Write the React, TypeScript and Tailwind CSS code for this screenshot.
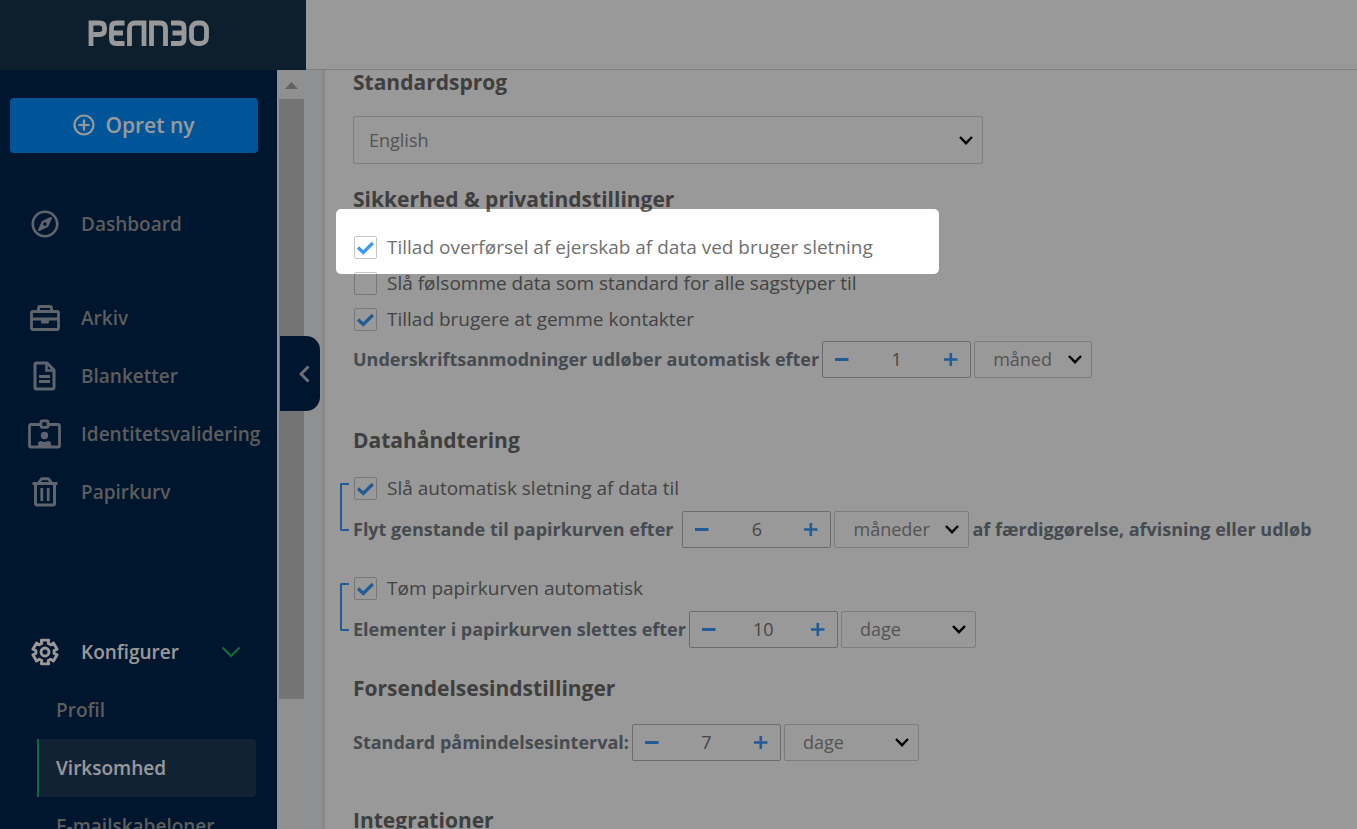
import { useId, useState, type ReactNode } from "react";
import { FaRegCompass } from "react-icons/fa";

function Logo() {
  return (
    <svg width="122" height="27" viewBox="0 0 122 27" fill="none" stroke="#fff" strokeWidth="4.800" role="img" aria-label="Penneo">
      <path d="M3 26V3H11.500Q16.500 3 16.500 7.500V10Q16.500 14.500 11.500 14.500H5.500" />
      <path d="M36.500 3H28Q23.500 3 23.500 7.500V19Q23.500 23.500 28 23.500H36.500M24 13H35" />
      <path d="M41.500 26V8.500Q41.500 3 47 3H56V26" />
      <path d="M63.500 26V3H72Q77.500 3 77.500 8.500V26" />
      <path d="M83 3H91.500Q96 3 96 7.500V19Q96 23.500 91.500 23.500H83M84.500 13H95.500" />
      <rect x="103.500" y="3" width="15" height="20.500" rx="6" />
    </svg>
  );
}

function BriefcaseIcon() {
  return (
    <svg width="30" height="26" viewBox="0 0 30 26" fill="none" stroke="currentColor" strokeWidth="2.800">
      <rect x="1.500" y="6.500" width="27" height="18" rx="1.500" />
      <path d="M8.500 6V3Q8.500 1.500 10 1.500H20Q21.500 1.500 21.500 3V6M2 14H28" />
      <path d="M11 14H19V17Q19 18.500 17.500 18.500H12.500Q11 18.500 11 17Z" fill="currentColor" stroke="none" />
    </svg>
  );
}

function FileIcon() {
  return (
    <svg width="23" height="30" viewBox="0 0 23 30" fill="none" stroke="currentColor" strokeWidth="3">
      <path d="M3.500 2H14L21 9V26.500Q21 28 19.500 28H3.500Q2 28 2 26.500V3.500Q2 2 3.500 2Z" />
      <path d="M13.500 2V9.500H21" strokeWidth="2.600" />
      <path d="M6 15.500H17M6 20.500H17" strokeWidth="2.800" />
    </svg>
  );
}

function BadgeIcon() {
  return (
    <svg width="33" height="30" viewBox="0 0 33 30" fill="none" stroke="currentColor" strokeWidth="2.800">
      <path d="M12 5.500H3Q1.500 5.500 1.500 7V26.500Q1.500 28 3 28H30Q31.500 28 31.500 26.500V7Q31.500 5.500 30 5.500H21" />
      <rect x="13" y="1.800" width="7" height="6.500" rx="1" />
      <circle cx="16.500" cy="16.500" r="3.700" fill="currentColor" stroke="none" />
      <path d="M10 28V25Q10 22 13 22Q16.500 24 20 22Q23 22 23 25V28Z" fill="currentColor" stroke="none" />
    </svg>
  );
}

function TrashIcon() {
  return (
    <svg width="26" height="30" viewBox="0 0 26 30" fill="none" stroke="currentColor" strokeWidth="3">
      <path d="M0.500 6.500H25.500M3.500 7V26.500Q3.500 28 5 28H21Q22.500 28 22.500 26.500V7" />
      <path d="M6.500 6L9 2.500Q9.500 1.800 10.500 1.800H15.500Q16.500 1.800 17 2.500L19.500 6" />
      <path d="M9.800 11V24M16.200 11V24" strokeWidth="2.800" />
    </svg>
  );
}

const gearPoints = [0, 60, 120, 180, 240, 300]
  .flatMap((tooth) =>
    [
      [-21, 9.2],
      [-17, 12.4],
      [17, 12.4],
      [21, 9.2],
    ].map(([offset, radius]) => {
      const angle = ((tooth + offset - 90) * Math.PI) / 180;
      return `${(radius * Math.cos(angle)).toFixed(2)},${(radius * Math.sin(angle)).toFixed(2)}`;
    }),
  )
  .join(" ");

function GearIcon() {
  return (
    <svg width="28" height="28" viewBox="-14 -14 28 28" fill="none" stroke="currentColor" strokeWidth="2.900" strokeLinejoin="round">
      <polygon points={gearPoints} />
      <circle r="4" />
    </svg>
  );
}

function NavItem({ icon, children }: { icon: ReactNode; children: ReactNode }) {
  return (
    <a href="#" className="flex h-[58px] items-center text-[#9b9b9b]">
      <span className="flex w-[89px] shrink-0 justify-center text-[#9fa9b5]">{icon}</span>
      <span className="-ml-2 whitespace-nowrap">{children}</span>
    </a>
  );
}

function Sidebar() {
  return (
    <aside className="w-[277px] shrink-0 bg-[#00234d] pt-7 text-[19px] leading-7 font-semibold">
      <div className="pr-[19px] pl-[10px]">
        <button className="flex h-[55px] w-full items-center justify-center gap-[10px] rounded bg-[#008eff] pb-px text-[21px] font-semibold text-white">
          <svg width="22" height="22" viewBox="0 0 22 22" fill="none" stroke="currentColor" strokeWidth="2.200">
            <circle cx="11" cy="11" r="9.500" />
            <path d="M11 5.500V16.500M5.500 11H16.500" />
          </svg>
          Opret ny
        </button>
      </div>
      <nav className="pt-[42px]">
        <NavItem icon={<FaRegCompass size={28} />}>Dashboard</NavItem>
        <div className="pt-9">
          <NavItem icon={<BriefcaseIcon />}>Arkiv</NavItem>
          <NavItem icon={<FileIcon />}>Blanketter</NavItem>
          <NavItem icon={<BadgeIcon />}>Identitetsvalidering</NavItem>
          <NavItem icon={<TrashIcon />}>Papirkurv</NavItem>
        </div>
        <div className="pt-[102px]">
          <button className="flex h-[58px] w-full items-center pr-9 font-semibold text-white">
            <span className="flex w-[89px] shrink-0 justify-center">
              <GearIcon />
            </span>
            <span className="-ml-2">Konfigurer</span>
            <svg className="ml-auto" width="20" height="12" viewBox="0 0 20 12" fill="none" stroke="#17b55f" strokeWidth="2.200">
              <path d="M1.500 1.500L10 10L18.500 1.500" />
            </svg>
          </button>
          <div className="pr-[21px] pl-[37px] text-[#9b9b9b]">
            <a href="#" className="flex h-[58px] items-center border-l-2 border-transparent pl-[17px]">Profil</a>
            <a href="#" className="flex h-[58px] items-center rounded-r border-l-2 border-[#17b55f] bg-[#1f3959] pl-[17px] text-white">Virksomhed</a>
            <a href="#" className="flex h-[58px] items-center border-l-2 border-transparent pl-[17px]">E-mailskabeloner</a>
          </div>
        </div>
      </nav>
    </aside>
  );
}

function Chevron() {
  return (
    <svg width="14" height="9" viewBox="0 0 14 9" fill="none" stroke="#000" strokeWidth="2.400">
      <path d="M1 1L7 7.200L13 1" />
    </svg>
  );
}

function Select({ label, value, className, height, pad }: { label: string; value: string; className: string; height: string; pad: string }) {
  return (
    <div className={`relative ${className}`}>
      <select aria-label={label} className={`block w-full appearance-none rounded-xs border border-[#d0d0d0] bg-white font-normal text-[#8c8c8c] ${height} ${pad}`}>
        <option>{value}</option>
      </select>
      <span className="pointer-events-none absolute inset-y-0 right-[10px] flex items-center">
        <Chevron />
      </span>
    </div>
  );
}

function Stepper({ label, start }: { label: string; start: number }) {
  const [value, setValue] = useState(start);
  return (
    <div className="flex h-[37px] w-[149px] shrink-0 items-center rounded-xs border border-[#b4b4b4] bg-white px-3">
      <button aria-label="Mindre" onClick={() => setValue(value - 1)} className="text-[#3a98fa]">
        <svg width="14" height="14" viewBox="0 0 14 14" fill="none" stroke="currentColor" strokeWidth="3">
          <path d="M0 6.500H13.500" />
        </svg>
      </button>
      <input aria-label={label} value={value} onChange={(e) => setValue(Number(e.target.value) || 0)} className="w-0 min-w-0 flex-1 text-center font-normal text-[#757575] outline-none" />
      <button aria-label="Mere" onClick={() => setValue(value + 1)} className="text-[#3a98fa]">
        <svg width="14" height="14" viewBox="0 0 14 14" fill="none" stroke="currentColor" strokeWidth="2.600">
          <path d="M0 6.500H13.500M6.800 0V13" />
        </svg>
      </button>
    </div>
  );
}

function Check({ children, checked = false }: { children: ReactNode; checked?: boolean }) {
  const id = useId();
  return (
    <div className="flex h-9 items-center pl-px">
      <span className="relative mt-px size-[23px] shrink-0">
        <input id={id} type="checkbox" defaultChecked={checked} className="peer block size-full appearance-none rounded-xs border border-[#c6c6c6] bg-white" />
        <svg className="pointer-events-none absolute inset-0 hidden peer-checked:block" width="23" height="23" viewBox="0 0 23 23" fill="none" stroke="#3a98fa" strokeWidth="3.200">
          <path d="M4 11.500L9.300 16.500L18.800 7" />
        </svg>
      </span>
      <label htmlFor={id} className="pl-[10px] text-[19px] whitespace-nowrap text-[#707070]">{children}</label>
    </div>
  );
}

function Heading({ children }: { children: ReactNode }) {
  return <h2 className="text-[21px] leading-6 font-bold text-[#696969]">{children}</h2>;
}

function Row({ children }: { children: ReactNode }) {
  return <div className="flex items-center gap-[3px] font-bold whitespace-nowrap text-[#737d88]">{children}</div>;
}

function Group({ children }: { children: ReactNode }) {
  return (
    <div className="relative">
      <span className="absolute top-[13px] -left-[13px] h-[48px] w-[9px] rounded-l-xs border-2 border-r-0 border-[#3a98fa]" />
      {children}
    </div>
  );
}

export default function App() {
  return (
    <div className="relative flex h-screen flex-col overflow-hidden bg-white font-['Open_Sans',sans-serif] text-[18px]">
      <header className="flex h-[70px] shrink-0">
        <div className="flex w-[306px] shrink-0 items-center justify-center bg-[#16324a] pb-1 pr-[9px]">
          <Logo />
        </div>
        <div className="flex-1 border-b border-[#d4d4d4]" />
      </header>
      <div className="flex min-h-0 flex-1">
        <Sidebar />
        <div className="relative flex w-12 shrink-0 bg-[#eef0f4]">
          <div className="w-[27px] bg-[#f1f1f1] pl-0.5">
            <svg className="h-[29px] w-[25px]" viewBox="0 0 25 29" aria-hidden="true">
              <path d="M6 19L12.500 12L19 19Z" fill="#a3a3a3" />
            </svg>
            <div className="h-[600px] bg-[#c1c1c1]" />
          </div>
          <div className="ml-auto w-[3px] bg-[#e5e7eb]" />
          <button aria-label="Skjul menu" className="absolute top-[266px] left-[3px] flex h-[75px] w-10 items-center justify-end rounded-r-[14px] bg-[#00234d] pr-[10px] text-[#b4bcc8]">
            <svg width="11" height="18" viewBox="0 0 11 18" fill="none" stroke="currentColor" strokeWidth="3">
              <path d="M9.500 1.500L2 9L9.500 16.500" />
            </svg>
          </button>
        </div>
        <main className="min-w-0 flex-1 pl-7">
          <Heading>Standardsprog</Heading>
          <div className="pt-[22px]">
            <Select label="Standardsprog" value="English" className="w-[630px] max-w-full" height="h-12" pad="pl-[15px]" />
          </div>

          <div className="pt-[23px]">
            <Heading>Sikkerhed &amp; privatindstillinger</Heading>
          </div>
          <div className="relative pt-[18px]">
            <div className="pointer-events-none absolute -top-[2px] -left-[17px] z-20 h-[65px] w-[603px] rounded-[5px] shadow-[0_0_0_2000px_rgba(0,0,0,0.4)]" />
            <Check checked>Tillad overførsel af ejerskab af data ved bruger sletning</Check>
            <Check>Slå følsomme data som standard for alle sagstyper til</Check>
            <Check checked>Tillad brugere at gemme kontakter</Check>
          </div>
          <div className="pt-1">
            <Row>
              <span>Underskriftsanmodninger udløber automatisk efter</span>
              <Stepper label="Underskriftsanmodninger udløber automatisk efter" start={1} />
              <Select label="Enhed" value="måned" className="w-[118px]" height="h-[37px]" pad="pl-[18px]" />
            </Row>
          </div>

          <div className="pt-[50px]">
            <Heading>Datahåndtering</Heading>
          </div>
          <div className="flex flex-col gap-[22px] pt-[18px]">
            <Group>
              <Check checked>Slå automatisk sletning af data til</Check>
              <div className="pt-[5px]">
                <Row>
                  <span className="pr-[6px]">Flyt genstande til papirkurven efter</span>
                  <Stepper label="Flyt genstande til papirkurven efter" start={6} />
                  <Select label="Enhed" value="måneder" className="w-[135px]" height="h-[37px]" pad="pl-[18px]" />
                  <span>af færdiggørelse, afvisning eller udløb</span>
                </Row>
              </div>
            </Group>
            <Group>
              <Check checked>Tøm papirkurven automatisk</Check>
              <div className="pt-[5px]">
                <Row>
                  <span>Elementer i papirkurven slettes efter</span>
                  <Stepper label="Elementer i papirkurven slettes efter" start={10} />
                  <Select label="Enhed" value="dage" className="w-[135px]" height="h-[37px]" pad="pl-[18px]" />
                </Row>
              </div>
            </Group>
          </div>

          <div className="pt-7">
            <Heading>Forsendelsesindstillinger</Heading>
          </div>
          <div className="pt-6">
            <Row>
              <span>Standard påmindelsesinterval:</span>
              <Stepper label="Standard påmindelsesinterval" start={7} />
              <Select label="Enhed" value="dage" className="w-[135px]" height="h-[37px]" pad="pl-[18px]" />
            </Row>
          </div>

          <div className="pt-[47px]">
            <Heading>Integrationer</Heading>
          </div>
        </main>
      </div>
    </div>
  );
}
